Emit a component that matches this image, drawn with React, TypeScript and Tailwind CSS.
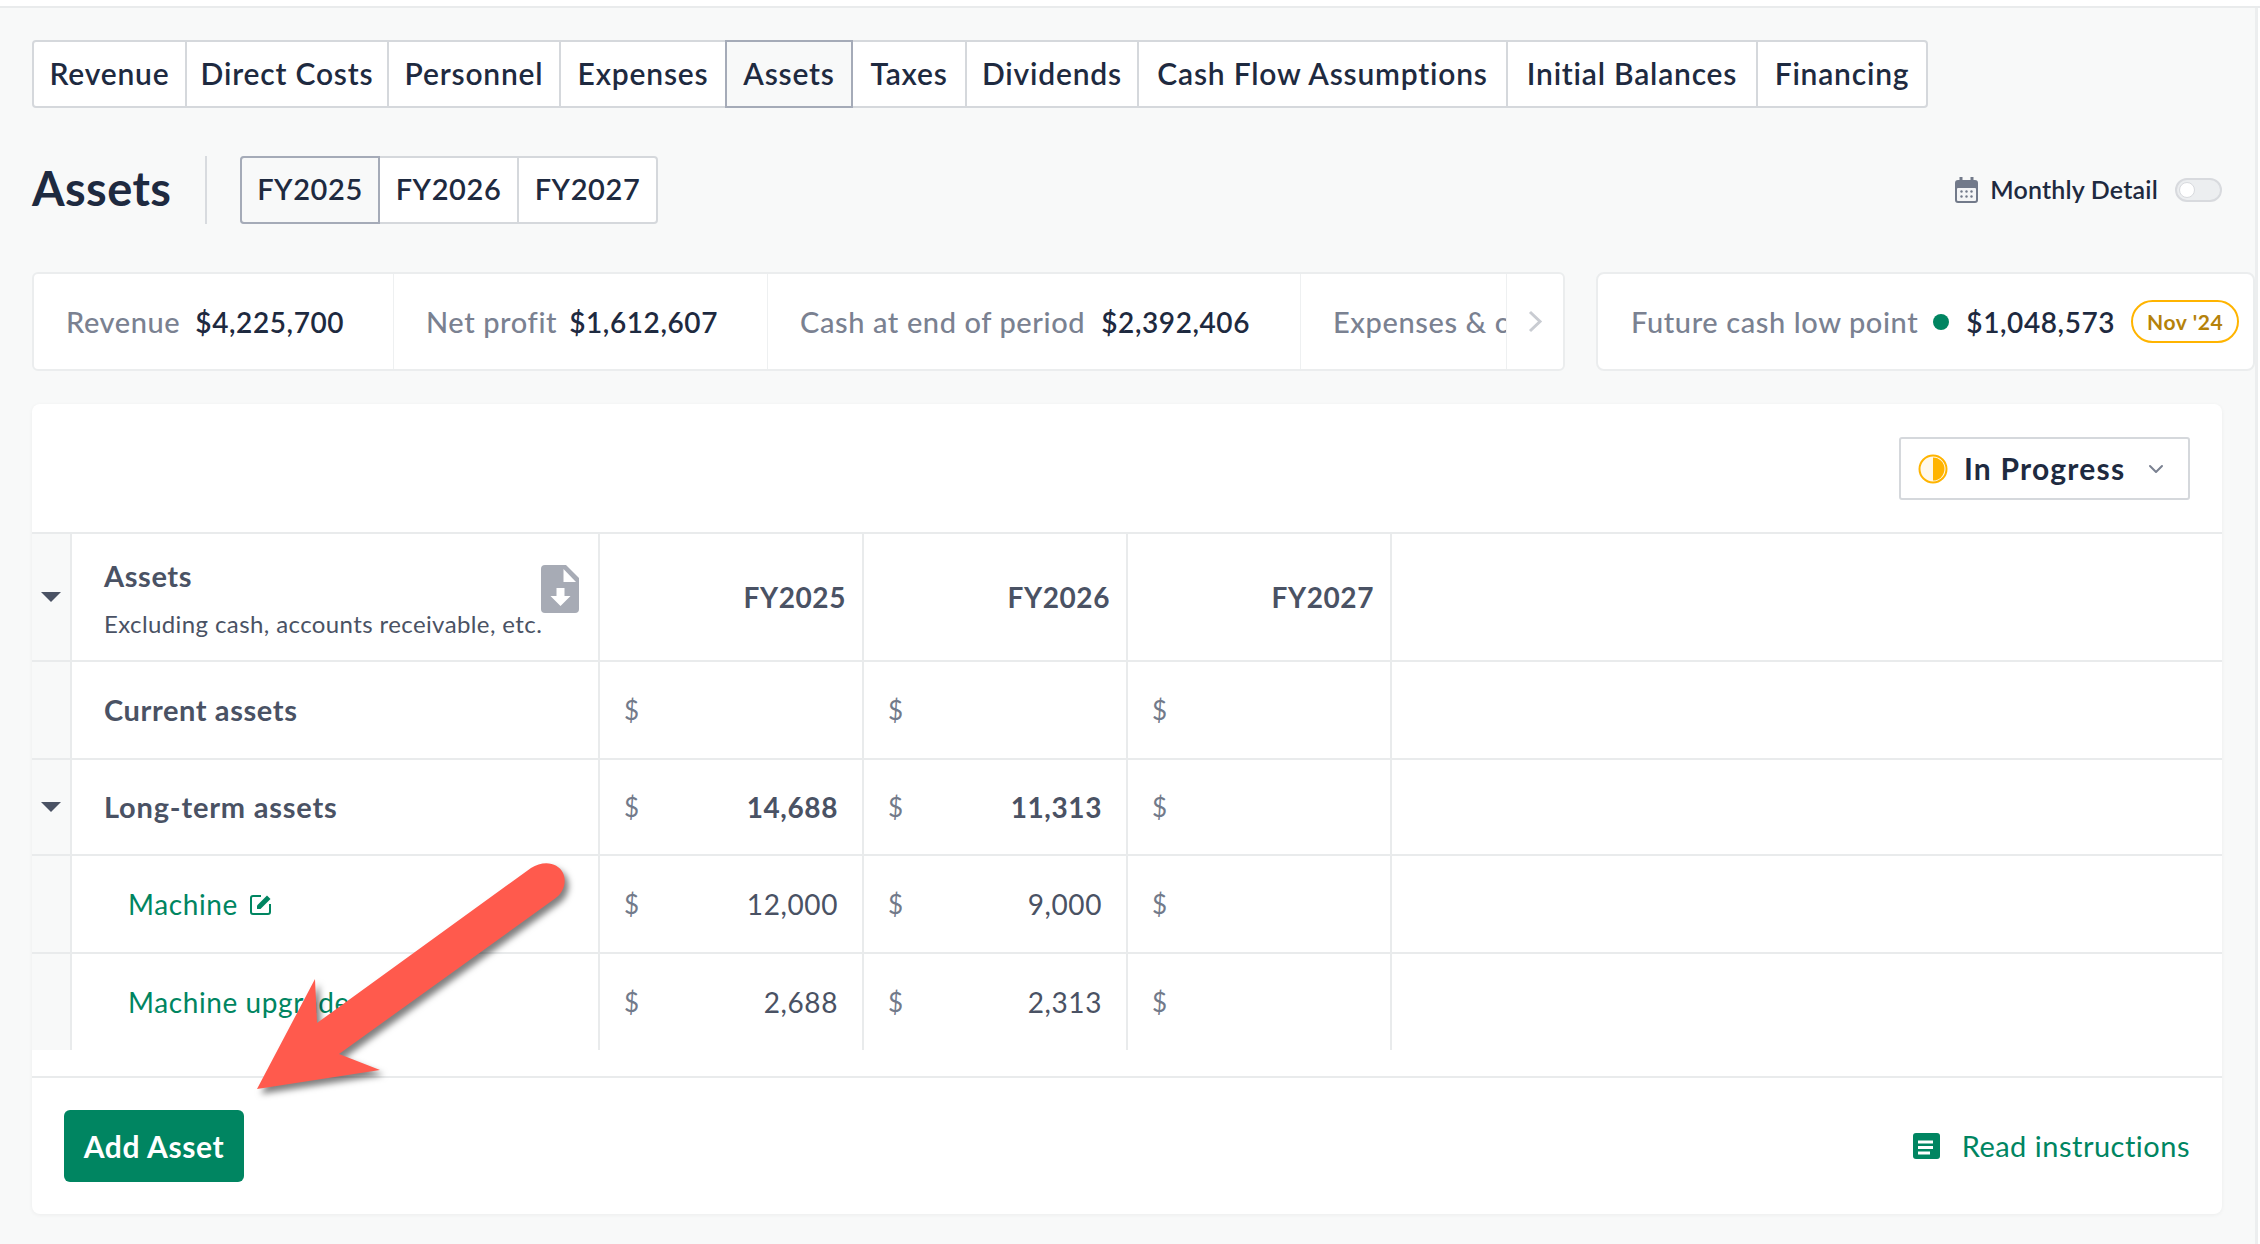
import React from 'react';
import { ChevronDown } from 'lucide-react';

const tabs = [
  { label: 'Revenue', w: 'w-[153px]' },
  { label: 'Direct Costs', w: 'w-[202px]' },
  { label: 'Personnel', w: 'w-[172px]' },
  { label: 'Expenses', w: 'w-[164px]' },
  { label: 'Assets', w: 'w-[128px]', active: true },
  { label: 'Taxes', w: 'w-[114px]' },
  { label: 'Dividends', w: 'w-[172px]' },
  { label: 'Cash Flow Assumptions', w: 'w-[369px]' },
  { label: 'Initial Balances', w: 'w-[250px]' },
  { label: 'Financing', w: 'w-[168px]' },
];

const years = [
  { label: 'FY2025', w: 'w-[140px]', active: true },
  { label: 'FY2026', w: 'w-[139px]' },
  { label: 'FY2027', w: 'w-[137px]' },
];

const Caret = () => (
  <svg width="20" height="10" viewBox="0 0 20 10" className="block">
    <path d="M0 0h20L10 10z" fill="#4a5264" />
  </svg>
);

const Row = ({ caret, name, cells, h, last }: { caret?: boolean; name: React.ReactNode; cells: React.ReactNode[]; h: string; last?: boolean }) => (
  <div className={`flex ${h} ${last ? '' : 'border-b-2 border-[#e9ebec]'}`}>
    <div className="w-[40px] shrink-0 bg-[#f8f9f9] border-r-2 border-[#e9ebec] flex items-center justify-end pr-[9px]">
      {caret && <Caret />}
    </div>
    <div className="w-[528px] shrink-0 border-r-2 border-[#e9ebec] relative flex items-center">{name}</div>
    {cells.map((c, i) => (
      <div key={i} className="w-[264px] shrink-0 border-r-2 border-[#e9ebec] flex items-center">
        {c}
      </div>
    ))}
    <div className="flex-1" />
  </div>
);

const Money = ({ v, bold }: { v?: string; bold?: boolean }) => (
  <div className="flex w-full items-center justify-between pl-[24px] pr-[24px] text-[28px]">
    <span className="text-[#727a8a] text-[26px]">$</span>
    <span className={bold ? 'font-bold text-[#4a5264]' : 'text-[#4a5264]'}>{v}</span>
  </div>
);

const YearHead = ({ v }: { v: string }) => (
  <div className="w-full pr-[16px] text-right text-[28px] font-bold text-[#4a5264]">{v}</div>
);

const Metric = ({ label, value, w, gap }: { label: string; value: string; w: string; gap: string }) => (
  <div className={`${w} ${gap} shrink-0 border-r border-[#eef0f1] flex items-center pl-[32px] whitespace-nowrap`}>
    <span className="text-[29px] text-[#7a8191] font-medium">{label}</span>
    <span className="text-[28px] text-[#1e2a40] font-semibold">{value}</span>
  </div>
);

export default function App() {
  return (
    <div className="w-[2260px] h-[1244px] overflow-hidden bg-white font-['Lato',sans-serif] tracking-[0.6px]">
      <div className="h-[8px] border-b-2 border-[#e9ebec]" />
      <div className="flex h-[1236px]">
        <div className="w-[2255px] shrink-0 overflow-hidden bg-[#f8f9f9] pl-[32px]">
          {/* tabs */}
          <div className="mt-[32px] flex w-fit h-[68px] rounded-[4px] border-2 border-[#d5d8dc] bg-white text-[30px] font-semibold text-[#1e2a40] tracking-[0.8px]">
            {tabs.map((t, i) => (
              <div
                key={t.label}
                className={`${t.w} -my-[2px] pb-[2px] flex items-center justify-center whitespace-nowrap ${
                  t.active ? 'border-2 border-[#a5abb8] bg-[#f8f9f9]' : i < tabs.length - 1 && !tabs[i + 1].active ? 'border-r-2 border-[#d5d8dc] border-y-2 border-y-transparent' : ''
                }`}
              >
                {t.label}
              </div>
            ))}
          </div>

          {/* title row */}
          <div className="mt-[48px] flex h-[68px] w-[2190px] items-center">
            <h1 className="w-[173px] -mt-[4px] text-[47px] font-bold text-[#1e2a40] tracking-[0.4px]">Assets</h1>
            <div className="h-full w-[2px] bg-[#d8dbdf]" />
            <div className="ml-[33px] flex h-full rounded-[4px] border-2 border-[#d5d8dc] bg-white text-[29px] font-semibold text-[#1e2a40]">
              {years.map((y, i) => (
                <div
                  key={y.label}
                  className={`${y.w} pb-[2px] flex items-center justify-center ${
                    y.active ? '-my-[2px] -ml-[2px] rounded-l-[4px] border-2 border-[#a5abb8] bg-[#f8f9f9]' : i < 2 ? 'border-r-2 border-[#d5d8dc]' : ''
                  }`}
                >
                  {y.label}
                </div>
              ))}
            </div>
            <div className="ml-auto flex items-center">
              <svg width="23" height="26" viewBox="0 0 23 26" className="mr-[12px]">
                <path d="M4.5 0h3v3h8V0h3v3H20a3 3 0 0 1 3 3v17a3 3 0 0 1-3 3H3a3 3 0 0 1-3-3V6a3 3 0 0 1 3-3h1.5z" fill="#727a8a" />
                <rect x="2" y="11" width="19" height="13" rx="1" fill="#f4f5f6" />
                <g fill="#727a8a">
                  <circle cx="6.5" cy="14.5" r="1.2" />
                  <circle cx="11.5" cy="14.5" r="1.2" />
                  <circle cx="16.5" cy="14.5" r="1.2" />
                  <circle cx="6.5" cy="19.5" r="1.2" />
                  <circle cx="11.5" cy="19.5" r="1.2" />
                  <circle cx="16.5" cy="19.5" r="1.2" />
                </g>
              </svg>
              <span className="text-[25px] font-semibold text-[#1e2a40] tracking-[0.2px]">Monthly Detail</span>
              <div className="ml-[17px] h-[24px] w-[47px] rounded-full border-2 border-[#d8dade] bg-[#eceef0] flex items-center pl-[2px]">
                <div className="h-[16px] w-[16px] rounded-full border border-[#d8dade] bg-white" />
              </div>
            </div>
          </div>

          {/* metrics */}
          <div className="mt-[48px] flex h-[99px] gap-[31px]">
            <div className="flex w-[1533px] shrink-0 rounded-[6px] border-2 border-[#ebedee] bg-white overflow-hidden">
              <Metric w="w-[360px]" gap="gap-[15px]" label="Revenue" value="$4,225,700" />
              <Metric w="w-[374px]" gap="gap-[12px]" label="Net profit" value="$1,612,607" />
              <Metric w="w-[533px]" gap="gap-[16px]" label="Cash at end of period" value="$2,392,406" />
              <div className="w-[206px] shrink-0 overflow-hidden border-r border-[#eef0f1] flex items-center pl-[32px] text-[29px] font-medium text-[#7a8191] whitespace-nowrap">
                Expenses &amp; c
              </div>
              <div className="flex-1 flex items-center justify-center">
                <svg width="15" height="23" viewBox="0 0 15 23" fill="none">
                  <path d="M2 2l10 9.5L2 21" stroke="#c9ccd2" strokeWidth="3" />
                </svg>
              </div>
            </div>
            <div className="flex w-[659px] shrink-0 items-center rounded-[8px] border-2 border-[#ebedee] bg-white pl-[33px] whitespace-nowrap">
              <span className="text-[29px] font-medium text-[#7a8191]">Future cash low point</span>
              <span className="ml-[15px] h-[16px] w-[16px] rounded-full bg-[#008561]" />
              <span className="ml-[17px] text-[28px] font-semibold text-[#1e2a40]">$1,048,573</span>
              <span className="ml-[16px] flex h-[43px] w-[108px] items-center justify-center rounded-full border-2 border-[#ffb400] text-[21px] font-bold text-[#b5820a]">
                Nov &apos;24
              </span>
            </div>
          </div>

          {/* main panel */}
          <div className="mt-[33px] w-[2190px] h-[810px] rounded-[8px] bg-white shadow-[0_1px_4px_rgba(0,0,0,0.05)] overflow-hidden">
            <div className="flex h-[130px] items-start justify-end border-b-2 border-[#e9ebec] pr-[32px] pt-[33px]">
              <div className="flex h-[63px] w-[291px] items-center rounded-[3px] border-2 border-[#d5d8dc] pl-[17px] pr-[20px]">
                <svg width="30" height="30" viewBox="0 0 30 30">
                  <circle cx="15" cy="15" r="13.5" fill="#fff8ea" stroke="#ffb400" strokeWidth="2" />
                  <path d="M15 3.5a11.5 11.5 0 0 1 0 23z" fill="#ffb400" />
                </svg>
                <span className="ml-[16px] text-[30px] font-bold text-[#1e2a40] tracking-[1.2px]">In Progress</span>
                <ChevronDown size={24} strokeWidth={2} color="#7a8191" className="ml-auto" />
              </div>
            </div>

            <Row
              h="h-[128px]"
              caret
              name={
                <>
                  <div className="pl-[32px]">
                    <div className="mt-[2px] text-[29px] font-bold text-[#4a5264]">Assets</div>
                    <div className="mt-[8px] text-[24px] text-[#4a5264] whitespace-nowrap tracking-[0.4px]">Excluding cash, accounts receivable, etc.</div>
                  </div>
                  <svg width="38" height="48" viewBox="0 0 38 48" className="absolute left-[469px] top-[31px]">
                    <path d="M4 0h21l13 13v31a4 4 0 0 1-4 4H4a4 4 0 0 1-4-4V4a4 4 0 0 1 4-4z" fill="#a7abb5" />
                    <path d="M22.5 4v13H35z" fill="#fff" />
                    <path d="M15.5 23h8v8h6l-10 10-10-10h6z" fill="#fff" />
                  </svg>
                </>
              }
              cells={[<YearHead v="FY2025" />, <YearHead v="FY2026" />, <YearHead v="FY2027" />]}
            />
            <Row
              h="h-[98px]"
              name={<div className="pl-[32px] text-[29px] font-bold text-[#4a5264]">Current assets</div>}
              cells={[<Money />, <Money />, <Money />]}
            />
            <Row
              h="h-[96px]"
              caret
              name={<div className="pl-[32px] text-[29px] font-bold text-[#4a5264] tracking-[0.8px]">Long-term assets</div>}
              cells={[<Money v="14,688" bold />, <Money v="11,313" bold />, <Money />]}
            />
            <Row
              h="h-[98px]"
              name={
                <div className="pl-[56px] flex items-center text-[28px] text-[#008561]">
                  Machine
                  <svg width="22" height="21" viewBox="0 0 22 21" fill="none" className="ml-[12px]">
                    <path d="M11 2H3a2 2 0 0 0-2 2v14a2 2 0 0 0 2 2h15a2 2 0 0 0 2-2v-8" stroke="#008561" strokeWidth="2" />
                    <path d="M7 15v-3.5L17 1.5l3.5 3.5L10.5 15z" fill="#008561" />
                  </svg>
                </div>
              }
              cells={[<Money v="12,000" />, <Money v="9,000" />, <Money />]}
            />
            <Row
              h="h-[96px]"
              last
              name={<div className="pl-[56px] text-[28px] text-[#008561]">Machine upgrade</div>}
              cells={[<Money v="2,688" />, <Money v="2,313" />, <Money />]}
            />

            <div className="mt-[26px] flex h-[138px] items-start justify-between border-t-2 border-[#e9ebec] pl-[32px] pr-[32px] pt-[32px]">
              <div className="flex h-[72px] w-[180px] items-center justify-center rounded-[6px] bg-[#008561] text-[30px] font-bold text-white">
                Add Asset
              </div>
              <div className="flex h-[72px] items-center text-[29px] text-[#008561] tracking-[0.5px]">
                <svg width="27" height="26" viewBox="0 0 27 26" className="mr-[22px]">
                  <rect width="27" height="26" rx="3" fill="#008561" />
                  <path d="M5 7.5h15v3H5zM5 13h15v3H5zM5 18.5h12v3H5z" fill="#fff" />
                </svg>
                Read instructions
              </div>
            </div>
          </div>
        </div>
        <div className="w-[3px] shrink-0 bg-[#eceeef]" />
      </div>

      {/* annotation arrow drawn over the page */}
      <svg width="340" height="250" viewBox="0 0 340 250" className="absolute left-[240px] top-[855px] drop-shadow-[4px_5px_3px_rgba(0,0,0,0.5)]">
        <path d="M17 234L75 124L77 168L291 13C303 5 318 7 323 18C327 27 324 38 313 45L99 199L140 215z" fill="#ff5a4d" />
      </svg>
    </div>
  );
}
